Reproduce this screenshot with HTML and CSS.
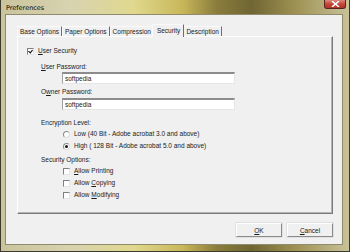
FILE: index.html
```html
<!DOCTYPE html>
<html lang="en">
<head>
    <meta charset="UTF-8">
    <title>Preferences</title>
    <link rel="stylesheet" href="styles.css">
</head>
<body>
    <div class="window">
        <div class="titlebar">
            <span class="title">Preferences</span>
            <span class="close">
                <svg width="9" height="6" viewBox="0 0 9 6">
                    <path d="M1.5 0.5 L7.5 5.5 M7.5 0.5 L1.5 5.5" stroke="#fff" stroke-width="1.6" stroke-linecap="round"/>
                </svg>
            </span>
        </div>
        <div class="client">
            <div class="tabs">
                <div class="tab">Base Options</div>
                <div class="tab">Paper Options</div>
                <div class="tab">Compression</div>
                <div class="tab active">Security</div>
                <div class="tab">Description</div>
            </div>
            <div class="panel">
                <div class="check main"><span class="box checked"></span><span><u>U</u>ser Security</span></div>

                <div class="label first"><u>U</u>ser Password:</div>
                <div class="input">softpedia</div>

                <div class="label second">O<u>w</u>ner Password:</div>
                <div class="input">softpedia</div>

                <div class="label section">Encryption Level:</div>
                <div class="option"><span class="radio"></span>Low (40 Bit - Adobe acrobat 3.0 and above)</div>
                <div class="option"><span class="radio on"></span>High ( 128 Bit - Adobe acrobat 5.0 and above)</div>

                <div class="label section">Security Options:</div>
                <div class="option"><span class="box"></span><span><u>A</u>llow Printing</span></div>
                <div class="option"><span class="box"></span><span>Allow <u>C</u>opying</span></div>
                <div class="option"><span class="box"></span><span>Allow <u>M</u>odifying</span></div>
            </div>
            <div class="buttons">
                <button class="btn"><u>O</u>K</button>
                <button class="btn"><u>C</u>ancel</button>
            </div>
        </div>
    </div>
</body>
</html>
```

FILE: styles.css
```css
body {
    margin: 0;
    font-family: 'Liberation Sans', Arial, sans-serif;
    font-size: 6.5px;
    color: #1a1a1a;
}

.window {
    width: 350px;
    height: 252px;
    box-sizing: border-box;
    display: flex;
    flex-direction: column;
    padding: 0 6px 6px 4px;
    border: 1px solid #3c3a2c;
    border-top: none;
    background:
        linear-gradient(90deg, #c9c49c 0%, #d8d3b0 20%, #e0d88e 38%, #c9b85a 52%, #8a7c3c 62%, #6f6634 72%, #9c8f50 84%, #c9c29a 100%);
}

.titlebar {
    height: 14px;
    display: flex;
    align-items: flex-start;
}

.title {
    font-family: 'DejaVu Sans', sans-serif;
    font-size: 6.5px;
    color: #000;
    margin: 4px 0 0 1px;
}

.close {
    margin-left: auto;
    margin-right: -3px;
    width: 22px;
    height: 9px;
    box-sizing: border-box;
    border: 1px solid #5c2420;
    border-top: none;
    border-radius: 0 0 3px 3px;
    background: linear-gradient(#d88a7c, #c4483a 50%, #b03428);
    display: flex;
    align-items: center;
    justify-content: center;
}

.client {
    flex: 1;
    background: #f0f0f0;
    border: 1px solid #8f8b6c;
    padding: 9px 9px 0 11px;
}

.tabs {
    display: flex;
    align-items: flex-end;
    height: 12px;
}

.tab {
    position: relative;
    height: 10px;
    line-height: 10px;
    box-sizing: border-box;
    padding: 0 2px;
    border-top: 1px solid #fafafa;
    border-left: 1px solid #fafafa;
    border-right: 1px solid #6e6e6e;
    white-space: nowrap;
}

.tab.active {
    height: 13px;
    line-height: 11px;
    padding: 0 3px 0 4px;
    margin: 0 -1px -1px -2px;
    background: #f0f0f0;
    z-index: 1;
}

.panel {
    height: 178px;
    box-sizing: border-box;
    border-top: 1px solid #fff;
    border-left: 1px solid #fff;
    border-right: 1px solid #7a7a7a;
    border-bottom: 1px solid #7a7a7a;
    box-shadow: inset -1px -1px #b4b4b4;
    padding: 8px 0 0 9px;
    display: flex;
    flex-direction: column;
    align-items: flex-start;
    line-height: 12px;
}

.check, .option {
    display: flex;
    align-items: center;
    gap: 4px;
    height: 12px;
}

.option {
    margin-left: 36px;
}

.label {
    margin-left: 14px;
    line-height: 11px;
}

.label.first {
    margin-top: 4px;
}

.label.second {
    margin-bottom: 1px;
}

.label.section {
    margin-top: 5px;
}

.option + .label.section {
    margin-top: 2px;
}

.input {
    margin: 0 0 2px 35px;
    width: 173px;
    height: 12px;
    box-sizing: border-box;
    background: #fff;
    border-top: 2px solid #8c8c8c;
    border-left: 1px solid #a0a0a0;
    border-right: 1px solid #e6e6e6;
    border-bottom: 1px solid #e6e6e6;
    padding-left: 2px;
    line-height: 9px;
}

.box {
    width: 7px;
    height: 7px;
    box-sizing: border-box;
    background: #fff;
    border-top: 1px solid #808080;
    border-left: 1px solid #808080;
    border-right: 1px solid #e4e4e4;
    border-bottom: 1px solid #e4e4e4;
    position: relative;
}

.box.checked::after {
    content: "";
    position: absolute;
    left: 1px;
    top: 0;
    width: 2px;
    height: 3px;
    border-right: 1.5px solid #000;
    border-bottom: 1.5px solid #000;
    transform: rotate(40deg);
}

.radio {
    width: 7px;
    height: 7px;
    box-sizing: border-box;
    border-radius: 50%;
    background: #fff;
    border: 1px solid #8a8a8a;
    border-right-color: #dcdcdc;
    border-bottom-color: #dcdcdc;
    display: flex;
    align-items: center;
    justify-content: center;
}

.radio.on::after {
    content: "";
    width: 3px;
    height: 3px;
    border-radius: 50%;
    background: #111;
}

.buttons {
    display: flex;
    justify-content: flex-end;
    gap: 5px;
    margin-top: 9px;
}

.btn {
    width: 46px;
    height: 14px;
    padding: 0;
    font: inherit;
    color: #1a1a1a;
    background: #f0f0f0;
    border-top: 1px solid #fff;
    border-left: 1px solid #fff;
    border-right: 1px solid #8a8a8a;
    border-bottom: 1px solid #8a8a8a;
    box-shadow: 0 0 0 0.5px #d0d0d0;
}
```
